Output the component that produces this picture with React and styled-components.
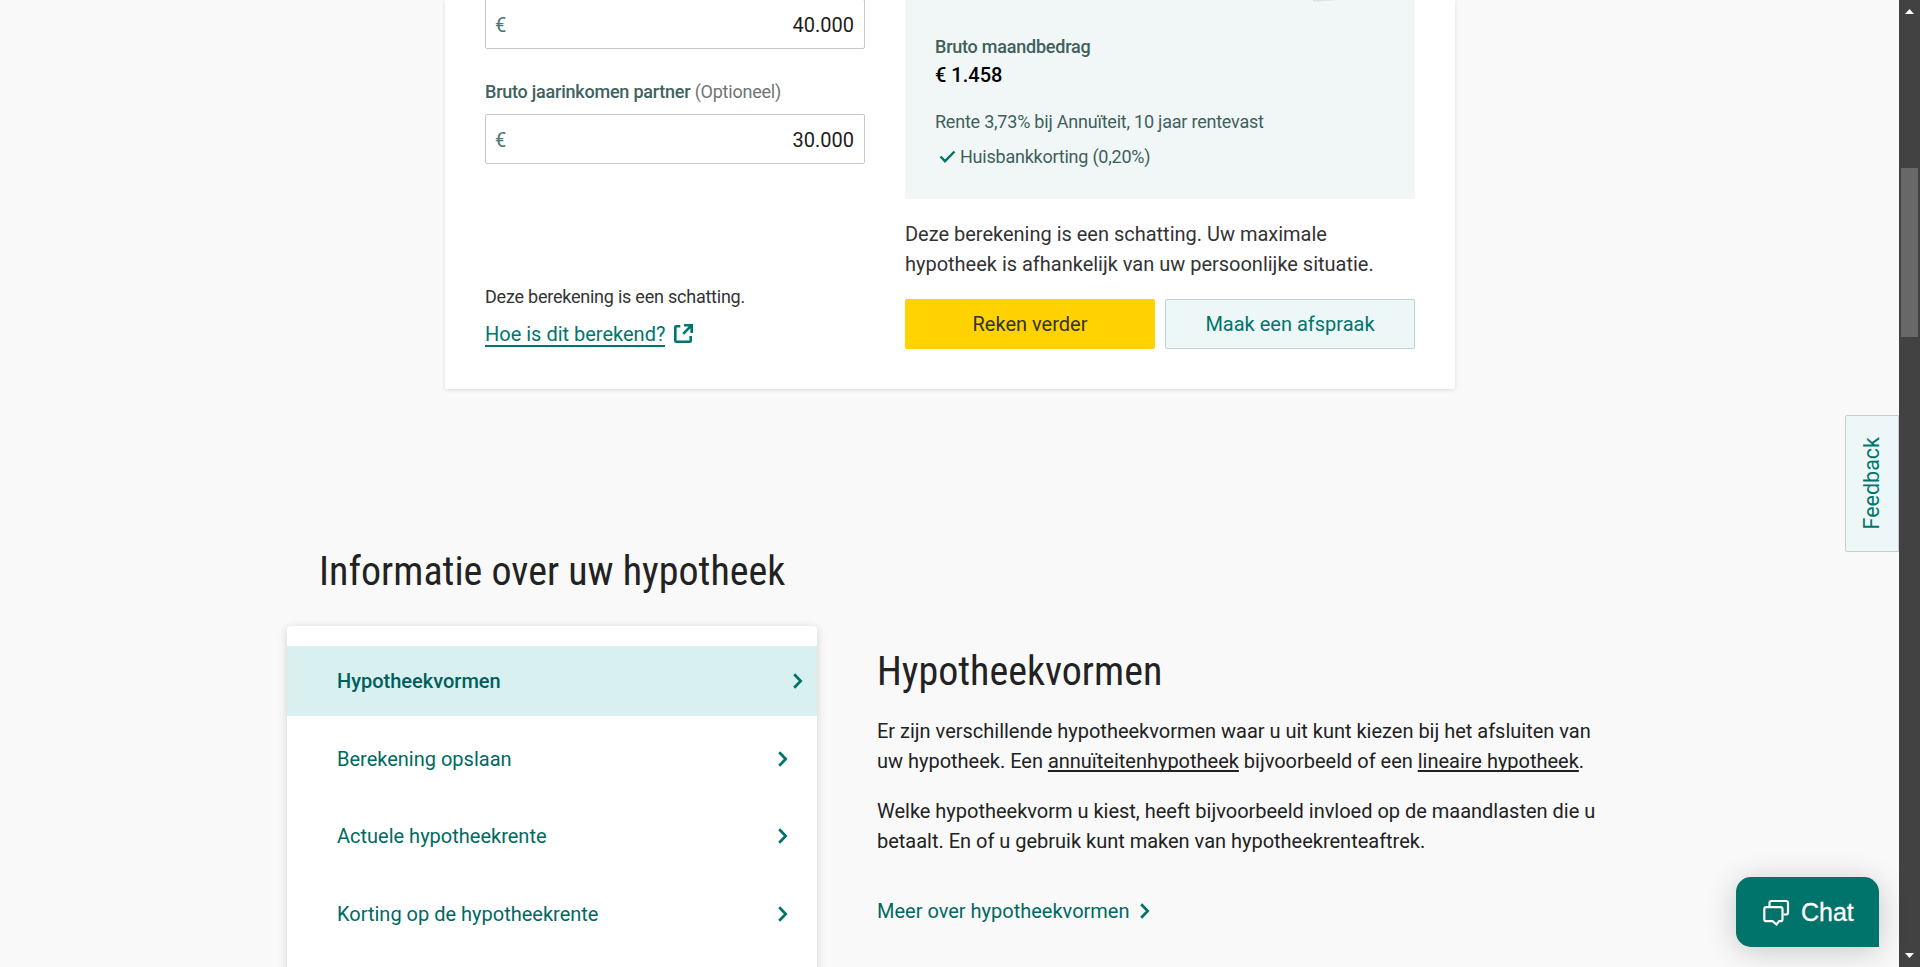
import React from 'react';
import styled, { createGlobalStyle } from 'styled-components';

const Global = createGlobalStyle`
  * { box-sizing: border-box; }
  body { margin: 0; background: #f9f9f9; font-family: Roboto, "Liberation Sans", sans-serif; font-size: 20px; line-height: 30px; color: #222; overflow: hidden; }
  h2, p { margin: 0; }
  a { color: inherit; }
`;
const Viewport = styled.div`display: flex; height: 967px; overflow: hidden;`;
const Page = styled.main`flex: 1; min-width: 0; height: 967px; overflow: hidden;`;
const Card = styled.section`
  display: flex; gap: 40px; width: 1010px; height: 389px; margin: 0 0 0 445px; padding: 0 40px 40px;
  background: #fff; border-radius: 0 0 2px 2px; box-shadow: 0 1px 4px rgba(0,0,0,.12);
`;
const Form = styled.div`display: flex; flex-direction: column; width: 380px;`;
const Field = styled.div`
  display: flex; flex: none; align-items: center; justify-content: space-between; height: 50px; padding: 1px 10px 0 9px;
  margin-top: ${p => p.$top}px; border: 1px solid #c8c8c8; border-radius: 2px; color: #1c1c1c;
`;
const Currency = styled.span`color: #4f7774;`;
const Label = styled.div`
  margin-top: 28px; height: 30px; font-size: 18px; font-weight: 500; color: #41625f; letter-spacing: -0.23px;
  span { font-weight: 400; color: #737373; }
`;
const Note = styled.div`margin-top: auto; font-size: 18px; line-height: 28px; color: #333; letter-spacing: -0.23px;`;
const HowLink = styled.div`
  display: flex; align-items: center; gap: 9px; margin: 7px 0 1px; height: 30px; color: #00756c;
  a { height: 28px; line-height: 31px; border-bottom: 2px solid #00756c; text-decoration: none; }
`;
const Result = styled.div`width: 510px;`;
const Summary = styled.div`height: 199px; padding: 33px 30px 0; background: #f1f7f7; font-size: 18px; line-height: 28px; color: #3f5f5c;`;
const Sheet = styled.svg`display: block; position: absolute; top: 0; left: 1313px;`;
const SumTitle = styled.div`font-weight: 500; letter-spacing: -0.23px;`;
const Amount = styled.div`height: 27px; font-size: 20px; font-weight: 500; color: #000; line-height: 29px;`;
const Rate = styled.div`margin-top: 20px; letter-spacing: -0.22px;`;
const Discount = styled.div`display: flex; align-items: center; gap: 4px; margin-top: 7px; padding-left: 4px; letter-spacing: -0.23px;`;
const Estimate = styled.p`margin-top: 20px; color: #333; letter-spacing: -0.01px;`;
const Actions = styled.div`display: flex; gap: 10px; margin-top: 20px;`;
const Button = styled.div`
  display: flex; align-items: center; justify-content: center; width: 250px; height: 50px; border-radius: 2px;
  background: ${p => (p.$primary ? '#ffd200' : '#edf7f7')}; color: ${p => (p.$primary ? '#333' : '#00756c')};
  border: 1px solid ${p => (p.$primary ? '#ffd200' : '#bcd3d1')};
`;
const Heading = styled.h2`
  font-family: "Roboto Condensed", Roboto, sans-serif; font-stretch: 75%; font-size: 40px; line-height: 50px; font-weight: 400;
  padding-top: 1px; height: 50px; color: #222; white-space: nowrap;
`;
const Info = styled.section`margin-top: 157px; padding-left: 287px;`;
const InfoTitle = styled.div`padding-left: 32px;`;
const Columns = styled.div`display: flex; gap: 60px; margin-top: 30px;`;
const Menu = styled.nav`
  width: 530px; height: 420px; padding-top: 20px; background: #fff; border-radius: 4px 4px 0 0;
  box-shadow: 0 2px 10px rgba(0,0,0,.16);
`;
const MenuItem = styled.div`
  display: flex; align-items: center; justify-content: space-between; height: 70px; margin-bottom: 7.7px;
  padding: 0 ${p => (p.$active ? 14 : 29)}px 0 50px; background: ${p => (p.$active ? '#d8f0f0' : 'transparent')};
  color: ${p => (p.$active ? '#005e5d' : '#00695f')}; font-weight: ${p => (p.$active ? 500 : 400)};
`;
const Article = styled.article`
  width: 730px; padding-top: 20px;
  p { margin-top: 20px; white-space: nowrap; letter-spacing: -0.01px; }
  u { text-underline-offset: 2px; text-decoration-thickness: 2px; text-decoration-skip-ink: none; }
`;
const More = styled.div`display: flex; align-items: center; gap: 10px; margin-top: 40px; color: #00695f;`;
const Feedback = styled.div`
  position: absolute; left: 1845px; top: 415px; width: 54px; height: 137px; background: #edf7f7;
  border: 1px solid #bcd3d1; border-radius: 2px 0 0 2px; display: flex; align-items: center; justify-content: center;
  color: #00756c;
  span { writing-mode: vertical-rl; transform: rotate(180deg); font-size: 21.5px; }
`;
const Chat = styled.div`
  position: absolute; left: 1736px; top: 877px; width: 143px; height: 70px; border-radius: 15px 15px 0 15px;
  background: #00736a; color: #fff; display: flex; align-items: center; gap: 11px; padding-left: 27px;
  font: 25px/1 "Liberation Sans", sans-serif; box-shadow: 0 4px 30px rgba(0,0,0,.2);
  -webkit-text-stroke: 0.3px #fff;
`;
const ChatLabel = styled.span`padding-top: 0;`;
const Scrollbar = styled.div`
  display: flex; flex-direction: column; align-items: center; justify-content: space-between; width: 21px; background: #424242; padding: 9px 0;
`;
const Thumb = styled.div`width: 17px; height: 169px; margin: 154px 0 auto; background: #686868;`;
const Arrow = styled.svg`display: block;`;

const Chevron = () => (
  <svg width="10" height="16" viewBox="0 0 10 16" fill="none" stroke="#00736a" strokeWidth="2.7"><path d="M1.2 1.2 7.7 8l-6.5 6.8" /></svg>
);

const items = ['Hypotheekvormen', 'Berekening opslaan', 'Actuele hypotheekrente', 'Korting op de hypotheekrente'];

export default function App() {
  return (
    <>
      <Global />
      <Viewport>
        <Page>
          <Card>
            <Form>
              <Field $top={-1}><Currency>€</Currency><span>40.000</span></Field>
              <Label>Bruto jaarinkomen partner <span>(Optioneel)</span></Label>
              <Field $top={7}><Currency>€</Currency><span>30.000</span></Field>
              <Note>Deze berekening is een schatting.</Note>
              <HowLink>
                <a>Hoe is dit berekend?</a>
                <svg width="19" height="19" viewBox="0 0 19 19" fill="none" stroke="#00756c" strokeWidth="2.6" strokeLinejoin="round"><path d="M6.300 2.300H2.300q-1 0-1 1v13.400q0 1 1 1h13.400q1 0 1-1V12" /><path d="M10 1.300h7.700v7.700M17.300 1.700 9.200 9.800" strokeLinejoin="miter" /></svg>
              </HowLink>
            </Form>
            <Result>
              <Summary>
                <SumTitle>Bruto maandbedrag</SumTitle>
                <Amount>€ 1.458</Amount>
                <Rate>Rente 3,73% bij Annuïteit, 10 jaar rentevast</Rate>
                <Discount>
                  <svg width="17" height="14" viewBox="0 0 17 14" fill="none" stroke="#00756c" strokeWidth="2.4"><path d="m1.5 6.500 4.500 4.700L15.500 1.500" /></svg>
                  Huisbankkorting (0,20%)
                </Discount>
              </Summary>
              <Estimate>Deze berekening is een schatting. Uw maximale<br />hypotheek is afhankelijk van uw persoonlijke situatie.</Estimate>
              <Actions><Button $primary>Reken verder</Button><Button>Maak een afspraak</Button></Actions>
            </Result>
          </Card>
          <Info>
            <InfoTitle><Heading>Informatie over uw hypotheek</Heading></InfoTitle>
            <Columns>
              <Menu>{items.map((t, i) => <MenuItem key={t} $active={i === 0}>{t}<Chevron /></MenuItem>)}</Menu>
              <Article>
                <Heading>Hypotheekvormen</Heading>
                <p>Er zijn verschillende hypotheekvormen waar u uit kunt kiezen bij het afsluiten van<br />uw hypotheek. Een <u>annuïteitenhypotheek</u> bijvoorbeeld of een <u>lineaire hypotheek</u>.</p>
                <p>Welke hypotheekvorm u kiest, heeft bijvoorbeeld invloed op de maandlasten die u<br />betaalt. En of u gebruik kunt maken van hypotheekrenteaftrek.</p>
                <More>Meer over hypotheekvormen<Chevron /></More>
              </Article>
            </Columns>
          </Info>
        </Page>
        <Scrollbar>
          <Arrow width="9" height="5" viewBox="0 0 9 5"><path d="M4.5 0 9 5H0z" fill="#fff" /></Arrow>
          <Thumb />
          <Arrow width="9" height="5" viewBox="0 0 9 5"><path d="M0 0h9L4.5 5z" fill="#fff" /></Arrow>
        </Scrollbar>
      </Viewport>
      <Sheet width="28" height="2" viewBox="0 0 28 2"><path d="M0 0h26L0 2z" fill="#dfe3e3" /></Sheet>
      <Feedback><span>Feedback</span></Feedback>
      <Chat>
        <svg width="27" height="27" viewBox="0 0 27 27" fill="none" stroke="#fff" strokeWidth="2.2" strokeLinejoin="round"><path d="M6.500 8V4Q6.500 2 8.500 2h14.500Q25 2 25 4v9.500Q25 15.500 23 15.500h-2.500" /><path d="M3.300 8.200h14.200q2 0 2 2v10q0 2-2 2h-1.500L13.500 25.500l-4-3.300h-6.200q-2 0-2-2v-10q0-2 2-2z" /></svg>
        <ChatLabel>Chat</ChatLabel>
      </Chat>
    </>
  );
}
